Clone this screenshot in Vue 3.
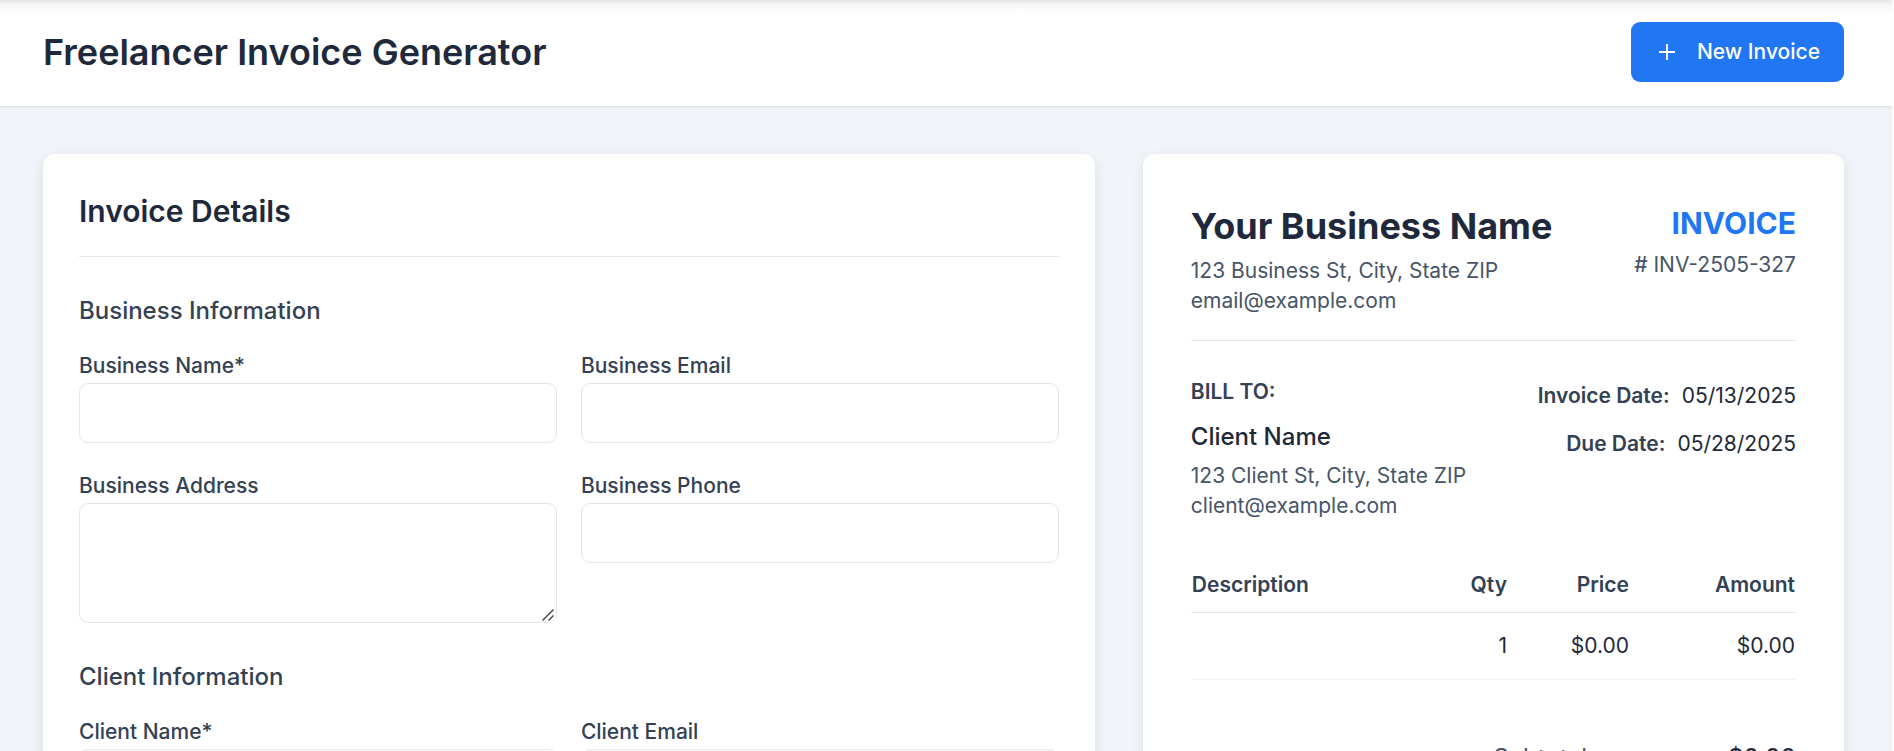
<script setup>
import { reactive } from 'vue'

const sections = reactive([
  {
    title: 'Business Information',
    fields: [
      { id: 'business-name', label: 'Business Name*', type: 'text', value: '' },
      { id: 'business-email', label: 'Business Email', type: 'email', value: '' },
      { id: 'business-address', label: 'Business Address', type: 'textarea', value: '' },
      { id: 'business-phone', label: 'Business Phone', type: 'tel', value: '' },
    ],
  },
  {
    title: 'Client Information',
    fields: [
      { id: 'client-name', label: 'Client Name*', type: 'text', value: '' },
      { id: 'client-email', label: 'Client Email', type: 'email', value: '' },
    ],
  },
])

const items = [{ description: '', qty: 1, price: '$0.00', amount: '$0.00' }]
</script>

<template>
  <div class="page">
    <header class="topbar">
      <h1>Freelancer Invoice Generator</h1>
      <button type="button" class="new-btn">
        <svg width="24" height="24" viewBox="0 0 24 24" fill="none" stroke="currentColor" stroke-width="2" aria-hidden="true">
          <path d="M4 12h16M12 4v16" />
        </svg>
        New Invoice
      </button>
    </header>

    <main class="content">
      <form class="card details" @submit.prevent>
        <h2>Invoice Details</h2>
        <section v-for="s in sections" :key="s.title">
          <h3>{{ s.title }}</h3>
          <div class="fields">
            <div v-for="f in s.fields" :key="f.id" class="field">
              <label :for="f.id">{{ f.label }}</label>
              <div v-if="f.type === 'textarea'" class="area">
                <textarea :id="f.id" v-model="f.value"></textarea>
                <svg class="grip" width="12" height="12" viewBox="0 0 12 12" fill="none" stroke="#4a4a4a" stroke-width="1.5" aria-hidden="true">
                  <path d="M0.5 11.5l11-11M6.5 11.5l5-5" />
                </svg>
              </div>
              <input v-else :id="f.id" v-model="f.value" :type="f.type" />
            </div>
          </div>
        </section>
      </form>

      <article class="card preview">
        <div class="head">
          <div>
            <h2 class="business">Your Business Name</h2>
            <p>123 Business St, City, State ZIP</p>
            <p>email@example.com</p>
          </div>
          <div class="right">
            <div class="invoice">INVOICE</div>
            <p><span class="hash">#</span> INV-2505-327</p>
          </div>
        </div>

        <div class="parties">
          <div>
            <h3 class="bill">BILL TO:</h3>
            <div class="client">Client Name</div>
            <p>123 Client St, City, State ZIP</p>
            <p>client@example.com</p>
          </div>
          <dl class="dates">
            <div><dt>Invoice Date:</dt><dd>05/13/2025</dd></div>
            <div><dt>Due Date:</dt><dd>05/28/2025</dd></div>
          </dl>
        </div>

        <table>
          <thead>
            <tr>
              <th class="desc" scope="col">Description</th>
              <th class="qty" scope="col">Qty</th>
              <th class="price" scope="col">Price</th>
              <th class="amount" scope="col">Amount</th>
            </tr>
          </thead>
          <tbody>
            <tr v-for="(i, n) in items" :key="n">
              <td class="desc">{{ i.description }}</td>
              <td>{{ i.qty }}</td>
              <td>{{ i.price }}</td>
              <td>{{ i.amount }}</td>
            </tr>
          </tbody>
        </table>

        <div class="totals">
          <span>Subtotal:</span>
          <strong>$0.00</strong>
        </div>
      </article>
    </main>
  </div>
</template>

<style>
body {
  background: #fcfcfc;
}
</style>

<style scoped>
* {
  box-sizing: border-box;
  margin: 0;
}

.page {
  display: flex;
  flex-direction: column;
  height: 100vh;
  margin-right: 2px;
  overflow: hidden;
  background: #f0f4f8;
  color: #1e293b;
  font-family: Inter, "Liberation Sans", sans-serif;
  font-size: 21px;
  line-height: 30px;
}

.topbar {
  display: flex;
  flex: none;
  align-items: center;
  justify-content: space-between;
  padding: 22px 48px 24px 43px;
  background: linear-gradient(#e6e6e6, #f5f5f5 5px, #fcfcfc 10px, #fff 15px);
  box-shadow: 0 1px 3px rgba(0, 0, 0, 0.09);
}

h1 {
  font-size: 36px;
  font-weight: 600;
  line-height: 48px;
}

.new-btn {
  display: flex;
  align-items: center;
  gap: 18px;
  height: 60px;
  padding: 0 24px;
  border: 0;
  border-radius: 9px;
  background: #2176f3;
  color: #fff;
  font: 500 21px/30px Inter, "Liberation Sans", sans-serif;
}

.content {
  display: grid;
  flex: 1;
  grid-template-columns: 3fr 2fr;
  gap: 48px;
  min-height: 0;
  padding: 48px 48px 0 43px;
}

.card {
  min-width: 0;
  min-height: 100%;
  height: max-content;
  border-radius: 12px;
  background: #fff;
  box-shadow: 0 4px 12px rgba(15, 23, 42, 0.09);
}

.details {
  padding: 36px;
}

.details h2 {
  padding-bottom: 24px;
  border-bottom: 1px solid #e2e8f0;
  font-size: 30px;
  font-weight: 600;
  line-height: 42px;
}

.details section {
  margin-top: 36px;
}

.details h3 {
  margin-bottom: 22px;
  color: #334155;
  font-size: 24px;
  font-weight: 500;
  line-height: 36px;
}

.fields {
  display: grid;
  grid-template-columns: 1fr 1fr;
  align-items: start;
  gap: 28px 24px;
}

.field {
  display: flex;
  flex-direction: column;
  gap: 2px;
}

label {
  color: #334155;
  font-weight: 500;
}

input,
textarea {
  display: block;
  width: 100%;
  height: 60px;
  padding: 12px 18px;
  border: 1px solid #e5e5e5;
  border-radius: 9px;
  background: #fff;
  color: inherit;
  font: inherit;
}

textarea {
  height: 120px;
  resize: vertical;
}

textarea::-webkit-resizer {
  background: transparent;
}

.area {
  position: relative;
}

.grip {
  position: absolute;
  right: 3px;
  bottom: 2px;
  pointer-events: none;
}

.preview {
  padding: 48px;
}

.head,
.parties {
  display: flex;
  justify-content: space-between;
}

.head {
  padding-bottom: 24px;
  border-bottom: 1px solid #e2e8f0;
}

p {
  color: #475569;
}

.business {
  margin-bottom: 6px;
  font-size: 36px;
  font-weight: 700;
  line-height: 48px;
}

.right {
  text-align: right;
}

.invoice {
  margin-bottom: 6px;
  color: #2176f3;
  font-size: 30px;
  font-weight: 700;
  line-height: 42px;
}

.hash {
  font-weight: 500;
}

.parties {
  padding: 36px 0;
}

.bill {
  margin-bottom: 12px;
  color: #334155;
  font-size: 21px;
  font-weight: 600;
}

.client {
  margin-bottom: 6px;
  font-size: 24px;
  font-weight: 500;
  line-height: 36px;
}

.dates {
  display: flex;
  flex-direction: column;
  gap: 10px;
  line-height: 38px;
}

.dates div {
  display: flex;
  justify-content: flex-end;
  gap: 12px;
}

dt {
  color: #334155;
  font-weight: 600;
}

dd {
  margin: 0;
}

table {
  width: 100%;
  border-collapse: collapse;
  table-layout: fixed;
}

th,
td {
  text-align: right;
}

th {
  padding: 13px 1px 12px;
  border-bottom: 1px solid #e2e8f0;
  color: #334155;
  font-weight: 600;
}

td {
  padding: 18px 1px;
  border-bottom: 1px solid #f1f5f9;
}

.desc {
  text-align: left;
}

.qty {
  width: 76px;
}

.price {
  width: 122px;
}

.amount {
  width: 166px;
}

.totals {
  display: flex;
  justify-content: space-between;
  width: 50%;
  margin: 60px 0 0 auto;
  font-size: 24px;
  line-height: 36px;
}

.totals span {
  color: #475569;
}

.totals strong {
  font-weight: 500;
}
</style>
